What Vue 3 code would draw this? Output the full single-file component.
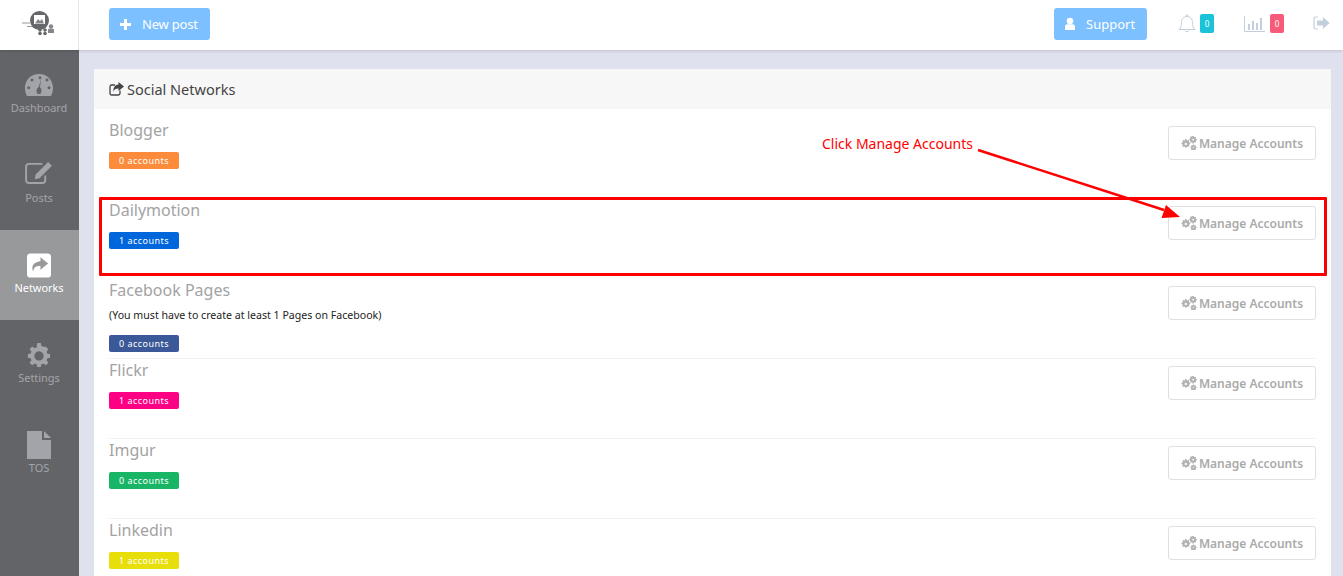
<script setup>
const nav = [
  { label: 'Dashboard', icon: 'gauge' },
  { label: 'Posts', icon: 'edit' },
  { label: 'Networks', icon: 'share', active: true },
  { label: 'Settings', icon: 'cog' },
  { label: 'TOS', icon: 'file' }
]
const networks = [
  { name: 'Blogger', count: 0, color: '#fd8b3c' },
  { name: 'Dailymotion', count: 1, color: '#0066dc' },
  { name: 'Facebook Pages', count: 0, color: '#3b5998', note: '(You must have to create at least 1 Pages on Facebook)' },
  { name: 'Flickr', count: 1, color: '#ff0084' },
  { name: 'Imgur', count: 0, color: '#18b566' },
  { name: 'Linkedin', count: 1, color: '#e8de0a' }
]
const cogs = 'M6 1h2l.3 1.6 1 .4L10.700 3l1.400 1.400-1 1.400.4 1L13 7v2l-1.500.300-.4 1 1 1.400L10.700 13.100l-1.400-1-1 .4L8 14H6l-.3-1.500-1-.4-1.400 1L1.900 11.700l1-1.400-.4-1L1 9V7l1.500-.3.4-1-1-1.400L3.300 2.900l1.400 1 1-.4z'
</script>

<template>
  <div class="page">
    <header class="topbar">
      <div class="logo">
        <svg width="48" height="34" viewBox="0 0 48 34">
          <path d="M7 15h8M12 18.500h6" stroke="#96979b" stroke-width="1" fill="none" />
          <circle cx="24.500" cy="12.500" r="9.500" fill="#66676b" />
          <rect x="19" y="7" width="11" height="9" fill="#fff" />
          <path d="M20 15.500l3-4.500 2 2 2-2 2 4.500z" fill="#85868a" />
          <circle cx="25" cy="22" r="1.800" fill="#66676b" />
          <circle cx="30" cy="22" r="1.800" fill="#66676b" />
          <circle cx="25" cy="25.500" r="1.800" fill="#66676b" />
          <circle cx="30" cy="25.500" r="1.800" fill="#66676b" />
          <circle cx="36" cy="18.500" r="2.200" fill="#85868a" />
          <path d="M33 25v-3c0-.8.600-1.200 1.200-1.200h3.600c.6 0 1.200.4 1.200 1.200v3z" fill="#85868a" />
        </svg>
      </div>
      <div class="topbar-main">
        <button class="top-btn new-post">
          <svg width="13" height="13" viewBox="0 0 13 13"><path d="M5 1h3v4h4v3H8v4H5V8H1V5h4z" fill="#fff" /></svg>
          <span>New post</span>
        </button>
        <div class="spacer"></div>
        <button class="top-btn support">
          <svg width="12" height="14" viewBox="0 0 12 14">
            <circle cx="6" cy="4" r="3.300" fill="#fff" />
            <path d="M1 13V9.500C1 8 2.200 7.200 3.500 7.200h5C9.800 7.200 11 8 11 9.500V13z" fill="#fff" />
          </svg>
          <span>Support</span>
        </button>
        <div class="stat bell-stat">
          <svg width="18" height="19" viewBox="0 0 18 19" fill="none" stroke="#c4cfdc" stroke-width="1">
            <path d="M1 15.500c2-1.500 2.500-4 2.500-7C3.500 5 5.500 2.500 9 2.500s5.500 2.500 5.500 6c0 3 .5 5.500 2.500 7z" />
            <path d="M7 16.500c.5 1.500 3.500 1.500 4 0" />
            <circle cx="9" cy="1.500" r=".8" />
          </svg>
          <span class="pill cyan">0</span>
        </div>
        <div class="stat chart-stat">
          <svg width="21" height="16" viewBox="0 0 21 16">
            <path d="M.5 0v15.500H21" stroke="#c4cfdc" fill="none" />
            <path d="M4 8h2v6H4zM8 5h2v9H8zM12 7h2v7h-2zM16 2h2v12h-2z" fill="#c4cfdc" />
          </svg>
          <span class="pill rose">0</span>
        </div>
        <svg class="logout" width="17" height="14" viewBox="0 0 17 14">
          <path d="M5 1H2.500C1.500 1 1 1.600 1 2.500v9c0 .9.500 1.500 1.500 1.500H5" stroke="#c4cfdc" stroke-width="1.200" fill="none" />
          <path d="M4 4.500h6V1l6.500 6L10 13V9.500H4z" fill="#c4cfdc" />
        </svg>
      </div>
    </header>

    <div class="body">
      <nav class="sidebar">
        <a v-for="item in nav" :key="item.label" class="nav-item" :class="{ active: item.active }">
          <div class="icon-box">
            <svg v-if="item.icon === 'gauge'" width="28" height="22" viewBox="0 0 28 22">
              <path fill-rule="evenodd" fill="currentColor" d="M14 0C6 0 0 6 0 14c0 3 .8 6 2 8h24c1.200-2 2-5 2-8C28 6 22 0 14 0zM15 2.200a1.500 1.500 0 1 0 .01 0zM7 4.500a1.500 1.500 0 1 0 .01 0zM22 4.500a1.500 1.500 0 1 0 .01 0zM3.700 12.200a1.500 1.500 0 1 0 .01 0zM24 12.200a1.500 1.500 0 1 0 .01 0zM16 5l-1 8.500c1 .7 1.500 1.700 1.500 3s-.6 2.800-1 3.500h-3c-.5-.7-1-2-1-3.500 0-1.500 1-2.600 2.200-3.200z" />
            </svg>
            <svg v-else-if="item.icon === 'edit'" class="edit-icon" width="28" height="22" viewBox="0 1 29 23">
              <path d="M21 15v5c0 1.800-1.200 3-3 3H4c-1.800 0-3-1.200-3-3V6c0-1.800 1.200-3 3-3h14" stroke="currentColor" stroke-width="2" fill="none" />
              <path d="M24 1l4 4-13 13-5 1 1-5z" fill="currentColor" />
            </svg>
            <svg v-else-if="item.icon === 'share'" width="24" height="25" viewBox="0 0 25 25">
              <rect x="0" y="0" width="25" height="25" rx="3.500" fill="#fff" />
              <path d="M14 4l8 6.500-8 6.500v-4c-4.500 0-7 1-7.500 6-2-5-1-10 7.500-11z" fill="#98999b" />
            </svg>
            <svg v-else-if="item.icon === 'cog'" width="24" height="24" viewBox="1 1 12 13">
              <path fill="currentColor" fill-rule="evenodd" :d="cogs + 'M7 5.500a2.500 2.500 0 1 0 .01 0z'" />
            </svg>
            <svg v-else width="24" height="28" viewBox="0 0 24 28">
              <path d="M0 0h15v9h9v19H0z" fill="currentColor" />
              <path d="M17 0l7 7h-7z" fill="currentColor" />
            </svg>
          </div>
          <span>{{ item.label }}</span>
        </a>
      </nav>

      <main class="content">
        <section class="card">
          <h2 class="card-head">
            <svg width="15" height="14" viewBox="0 0 15 14">
              <path d="M11 8.500v2.700c0 1-.6 1.800-1.700 1.800H2.700C1.600 13 1 12.200 1 11.200V4.800C1 3.800 1.600 3 2.700 3H6" stroke="#444" stroke-width="1.300" fill="none" />
              <path d="M9.500 0L15 4.500 9.500 9V6.500c-3 0-4.500.8-5 3.500C4 6 5.500 3 9.500 2.500z" fill="#444" />
            </svg>
            Social Networks
          </h2>
          <ul class="rows">
            <li v-for="n in networks" :key="n.name" class="row">
              <div class="row-info">
                <h3>{{ n.name }}</h3>
                <p v-if="n.note">{{ n.note }}</p>
                <span class="badge" :style="{ background: n.color }">{{ n.count }} accounts</span>
              </div>
              <button class="manage">
                <svg width="16" height="14" viewBox="0 0 16 14">
                  <path fill="#b2b2b2" fill-rule="evenodd" d="M4.500 3l1 .1.300 1 .9.300.8-.5.900.9-.5.900.3.8 1 .3v1.300l-1 .3-.3.800.5.900-.9.900-.8-.5-.9.300-.3 1H4.200l-.3-1-.8-.3-.9.500-.9-.9.500-.9-.3-.8-1-.3V6.900l1-.3.3-.8-.5-.9.900-.9.900.5.800-.3.300-1zM4.800 6.800a1.200 1.200 0 1 0 .01 0z" />
                  <path fill="#b2b2b2" fill-rule="evenodd" d="M11.500 0h1.200l.2.800.7.300.7-.4.800.8-.4.700.3.700.9.200v1.200l-.9.200-.3.700.4.700-.8.800-.7-.4-.7.300-.2.900h-1.200l-.2-.9-.7-.3-.7.4-.8-.8.4-.7-.3-.7-.8-.2V2.600l.8-.2.300-.7-.4-.7.800-.8.700.4.700-.3zM12.100 2.700a.8.800 0 1 0 .01 0z" />
                  <path fill="#b2b2b2" fill-rule="evenodd" d="M12 8.500h1l.2.700.5.200.6-.3.700.7-.3.600.2.500.7.200v1l-.7.200-.2.500.3.600-.7.700-.6-.3-.5.200-.2.700h-1l-.2-.7-.5-.2-.6.3-.7-.7.3-.6-.2-.5-.7-.2v-1l.7-.2.200-.5-.3-.6.700-.7.600.3.500-.2zM12.500 10.700a.6.600 0 1 0 .01 0z" />
                </svg>
                Manage Accounts
              </button>
            </li>
          </ul>
        </section>
      </main>
    </div>

    <div class="highlight"></div>
    <div class="note">Click Manage Accounts</div>
    <svg class="arrow" width="220" height="80" viewBox="0 0 220 80">
      <path d="M1 2L187 62" stroke="#f00" stroke-width="2.600" fill="none" />
      <path d="M203 69L184.500 70L189 57z" fill="#f00" />
    </svg>
  </div>
</template>

<style scoped>
.page {
  position: relative;
  height: 576px;
  overflow: hidden;
  background: #dfe1ef;
  font-family: "Noto Sans", "Open Sans", sans-serif;
  color: #444;
}
.topbar {
  position: relative;
  z-index: 2;
  display: flex;
  height: 50px;
  background: #fff;
  box-shadow: 0 1px 3px rgba(0, 0, 0, 0.14);
}
.logo {
  width: 78px;
  flex: none;
  display: flex;
  align-items: center;
  justify-content: center;
  border-right: 1px solid #e6e9ef;
}
.topbar-main {
  flex: 1;
  display: flex;
  align-items: center;
  padding: 0 13px 0 30px;
}
.spacer { flex: 1; }
.top-btn {
  display: flex;
  align-items: center;
  height: 32px;
  margin: -2px 0 0;
  border: 0;
  border-radius: 3px;
  background: #7cc0ff;
  color: #fff;
  font: 13px "Noto Sans", sans-serif;
}
.new-post { width: 101px; padding: 0 0 0 10px; gap: 10px; letter-spacing: -0.2px; }
.support { width: 93px; padding: 0 0 0 10px; gap: 10px; }
.stat { display: flex; align-items: center; margin-top: -3px; }
.bell-stat { gap: 4px; margin-left: 31px; }
.chart-stat { gap: 5px; margin-left: 30px; }
.logout { margin: -4px 0 0 29px; }
.pill {
  width: 14px;
  height: 19px;
  border-radius: 2px;
  color: #fff;
  font-size: 8px;
  line-height: 19px;
  text-align: center;
}
.cyan { background: #1ac3d8; }
.rose { background: #f65c7a; }
.body { display: flex; height: 526px; }
.sidebar {
  width: 79px;
  flex: none;
  background: #636468;
}
.nav-item {
  height: 90px;
  display: flex;
  flex-direction: column;
  align-items: center;
  padding: 22px 1px 0 0;
  box-sizing: border-box;
  color: #a3a4a9;
  font-size: 11px;
  letter-spacing: -0.05px;
  line-height: 14px;
}
.icon-box {
  display: flex;
  align-items: center;
  justify-content: center;
  height: 26px;
  margin-bottom: 3px;
}
.icon-box svg { display: block; flex: none; }
.icon-box .edit-icon { margin-top: -4px; }
.nav-item.active { background: #98999b; color: #fff; }
.content {
  flex: 1;
  min-width: 0;
  padding: 19px 12px 0 15px;
}
.card { background: #fff; border-radius: 2px; }
.card-head {
  display: flex;
  align-items: center;
  gap: 3px;
  height: 40px;
  margin: 0;
  padding: 0 15px;
  background: #f7f7f7;
  color: #444;
  font-size: 14.500px;
  font-weight: 400;
}
.rows { list-style: none; margin: 0; padding: 10px 15px 0; }
.row {
  display: flex;
  justify-content: space-between;
  height: 80px;
  box-sizing: border-box;
  border-bottom: 1px solid #f2f2f2;
}
.row:nth-child(-n+2) { border-bottom-color: transparent; }
.row-info h3 {
  margin: 0;
  height: 24px;
  color: #a3a3a3;
  font-size: 16px;
  font-weight: 400;
  line-height: 22px;
}
.row-info p {
  margin: 5px 0 13px;
  color: #222;
  font-size: 10.600px;
  line-height: 14px;
}
.badge {
  display: block;
  width: 70px;
  height: 17px;
  margin-top: 9px;
  border-radius: 2px;
  color: #fff;
  font-size: 9px;
  letter-spacing: 0.45px;
  line-height: 17px;
  text-align: center;
}
.row-info p + .badge { margin-top: 0; }
.manage {
  display: flex;
  align-items: center;
  justify-content: center;
  gap: 2px;
  width: 148px;
  height: 34px;
  margin-top: 7px;
  padding: 0;
  border: 1px solid #e0e0e0;
  border-radius: 3px;
  background: #fff;
  color: #aaa;
  font: 600 12px "Noto Sans", sans-serif;
}
.highlight {
  position: absolute;
  left: 99px;
  top: 197px;
  width: 1222px;
  height: 73px;
  border: 3px solid #f00;
  border-radius: 1px;
}
.note {
  position: absolute;
  left: 822px;
  top: 135px;
  color: #f00;
  font-size: 14px;
  line-height: 18px;
}
.arrow {
  position: absolute;
  left: 977px;
  top: 148px;
}
</style>
